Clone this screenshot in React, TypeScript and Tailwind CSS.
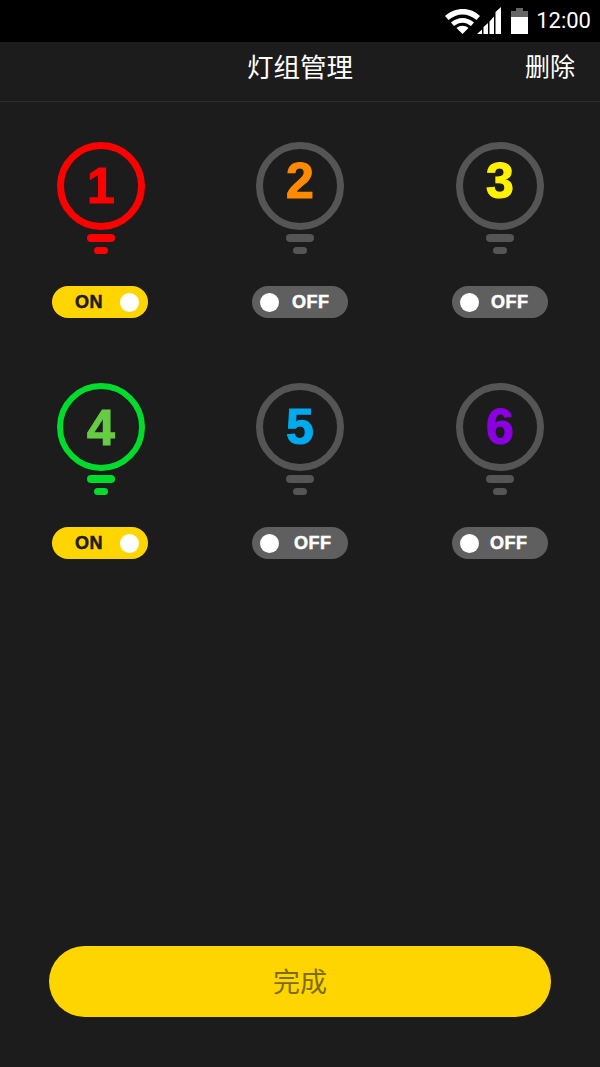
import React from "react";

const cjk = "font-['Noto_Sans_CJK_SC','Noto_Sans_CJK_JP',sans-serif]";

type L = { n: number; num: string; on: boolean; ring: string; bar: string; nudge: string; shift: string; gap: string; };

function Bulb({ l }: { l: L }) {
  return (
    <div className={`flex flex-col items-center w-[88px] ${l.shift}`}>
      <div className={`w-[88px] h-[88px] rounded-full ${l.ring} flex items-center justify-center`}>
        <span className={`font-['Liberation_Sans',sans-serif] font-bold text-[50px] leading-none [-webkit-text-stroke:1.2px_currentColor] ${l.num} ${l.nudge}`}>{l.n}</span>
      </div>
      <div className={`mt-[4px] w-[28px] h-[8px] rounded-full ${l.bar}`} />
      <div className={`mt-[5px] w-[14px] h-[7px] rounded-full ${l.bar}`} />
    </div>
  );
}

function Toggle({ on, gap }: { on: boolean; gap: string }) {
  return on ? (
    <div className="mt-[32px] w-[96px] h-[32px] rounded-full bg-[#ffd500] flex items-center justify-between pl-[23px] pr-[9px]">
      <span className="font-['Liberation_Sans',sans-serif] font-bold text-[18px] tracking-[0.5px] [-webkit-text-stroke:0.5px_currentColor] text-[#1c1c1c]">ON</span>
      <span className="w-[19px] h-[19px] rounded-full bg-white" />
    </div>
  ) : (
    <div className={`mt-[32px] w-[96px] h-[32px] rounded-full bg-[#5f5f5f] flex items-center pl-[8px] ${gap}`}>
      <span className="w-[19px] h-[19px] rounded-full bg-white" />
      <span className="font-['Liberation_Sans',sans-serif] font-bold text-[18px] tracking-[0.5px] [-webkit-text-stroke:0.5px_currentColor] text-white">OFF</span>
    </div>
  );
}

const off = { on: false, ring: "border-[7px] border-[#555555]", bar: "bg-[#555555]" };
const rows: L[][] = [
  [
    { n: 1, num: "text-[#ff0000]", on: true, ring: "border-[7px] border-[#ff0000]", bar: "bg-[#ff0000]", nudge: "", shift: "translate-x-[1px]", gap: "" },
    { ...off, n: 2, num: "text-[#ff8a00]", nudge: "-translate-y-[5px]", shift: "", gap: "gap-[13px]" },
    { ...off, n: 3, num: "text-[#fff200]", nudge: "-translate-y-[5px]", shift: "", gap: "gap-[12px]" },
  ],
  [
    { n: 4, num: "text-[#66cc44]", on: true, ring: "border-[6px] border-[#00dc2c]", bar: "bg-[#00dc2c]", nudge: "translate-y-[1px]", shift: "translate-x-[1px]", gap: "" },
    { ...off, n: 5, num: "text-[#00aaee]", nudge: "", shift: "", gap: "gap-[15px]" },
    { ...off, n: 6, num: "text-[#8b00e0]", nudge: "", shift: "", gap: "gap-[11px]" },
  ],
];

export default function App() {
  return (
    <div className="w-[600px] h-[1067px] bg-[#1c1c1c] flex flex-col overflow-hidden">
      <div className="h-[42px] bg-black flex items-center justify-end pr-[9px] shrink-0">
        <svg width="36" height="26" viewBox="0 0 36 26" className="mr-[-4px]">
          <path d="M0 8 C10 -1.500 26 -1.500 35 8 L31.500 12 C23 4.500 12 4.500 3.500 12Z" fill="#fff" />
          <path d="M6 14.500 C13 8.500 22 8.500 29 14.500 L26 18 C20.500 13.500 14.500 13.500 9 18Z" fill="#fff" />
          <path d="M11.500 20 C15 17 20 17 23.500 20 L17.500 26Z" fill="#fff" />
        </svg>
        <svg width="24" height="28" viewBox="0 0 24 28">
          <path d="M0 27 L5 22.500 V27Z M6.500 27 V20 L11 16 V27Z M12.500 27 V14.500 L17 9.500 V27Z M18.500 27 V5 L24 0 V27Z" fill="#fff" />
        </svg>
        <svg width="17" height="26" viewBox="0 0 17 26" className="ml-[10px]">
          <rect x="0" y="9" width="17" height="17" fill="#fff" />
          <path d="M0 9 V3 H5 V0 H12 V3 H17 V9Z" fill="#666" />
        </svg>
        <span className="ml-[8px] font-['Roboto',sans-serif] text-[22px] leading-none text-white">12:00</span>
      </div>
      <div className={`h-[60px] shrink-0 border-b border-[#2c2c2c] flex items-center justify-between pl-[25px] pr-[25px] pb-[10px] ${cjk}`}>
        <span className="w-[50px]" />
        <span className="text-[26.5px] text-white leading-none">灯组管理</span>
        <span className="w-[50px] text-[25px] leading-none text-white -translate-y-[1px]">删除</span>
      </div>
      <div className="flex flex-col gap-[65px] pt-[40px] pl-[52px] pr-[52px]">
        {rows.map((r, i) => (
          <div key={i} className="flex justify-between">
            {r.map((l) => (
              <div key={l.n} className="flex flex-col items-center w-[96px]">
                <Bulb l={l} />
                <Toggle on={l.on} gap={l.gap} />
              </div>
            ))}
          </div>
        ))}
      </div>
      <button className={`mt-auto mb-[50px] mx-[49px] h-[71px] rounded-full bg-[#ffd500] text-[27px] text-[#7d6c14] ${cjk}`}>
        完成
      </button>
    </div>
  );
}
